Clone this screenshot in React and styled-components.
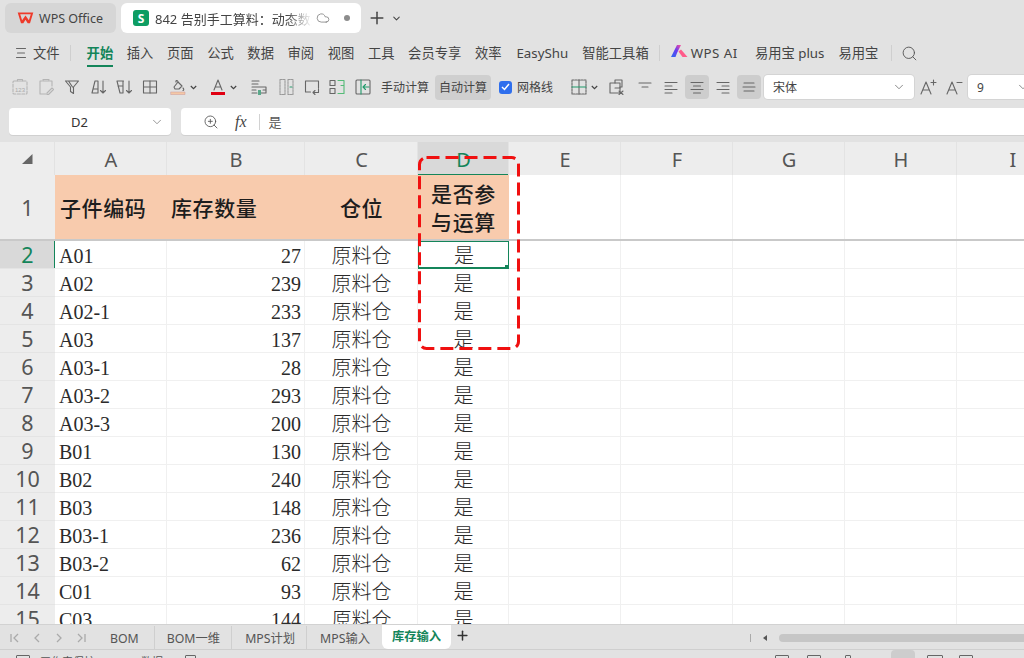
import React from "react";
import styled, { createGlobalStyle } from "styled-components";
import { Plus, ChevronDown, Cloud, Search, ZoomIn } from "lucide-react";

const UI = `"Noto Sans", "Noto Sans CJK SC", sans-serif`;
const CELL = `"Liberation Serif", "Noto Sans CJK SC", serif`;
const GREEN = "#14855a";
const COLS = "55px 112px 138px 113px 91px 112px 112px 112px 112px 112px";

const Global = createGlobalStyle`
  html, body { margin: 0; padding: 0; background: #e2e2e2; }
  * { box-sizing: border-box; }
`;
const Page = styled.div`
  width: 1024px; height: 658px; overflow: hidden; display: flex; flex-direction: column;
  background: #e2e2e2; font-family: ${UI}; color: #3c3c3c;
`;

/* title bar */
const TitleBar = styled.div`
  height: 37px; flex: none; display: flex; align-items: flex-start; padding: 3px 0 0 5px; gap: 5px;
`;
const WpsTab = styled.div`
  width: 111px; height: 30px; border-radius: 6px; background: #d6d6d6; display: flex; align-items: center;
  padding-left: 12px; gap: 5px; font-size: 12.5px; color: #444;
`;
const DocTab = styled.div`
  width: 240px; height: 30px; border-radius: 6px; background: #fff; display: flex; align-items: center;
  padding-left: 12px; font-size: 13px; color: #444;
`;
const SBadge = styled.span`
  width: 16px; height: 16px; border-radius: 3px; background: #0d9d63; color: #fff; font-size: 12px; font-weight: 700;
  display: flex; align-items: center; justify-content: center; flex: none; margin-right: 6px;
`;
const DocTitle = styled.span`
  width: 157px; white-space: nowrap; overflow: hidden; flex: none;
  mask-image: linear-gradient(to right, #000 84%, transparent 100%);
`;
const Dot = styled.span`
  width: 6px; height: 6px; border-radius: 50%; background: #8c8c8c; margin-left: 14px;
`;
const AddGroup = styled.div`
  display: flex; align-items: center; height: 30px; margin-left: 1px; gap: 4px; color: #444;
`;

/* menu */
const Menu = styled.div`
  height: 32px; flex: none; display: flex; align-items: center; padding-left: 16px; font-size: 13.3px; color: #444; white-space: nowrap;
`;
const MenuItem = styled.div`
  position: relative; margin-left: ${p => p.$ml ?? 13.6}px; font-weight: ${p => (p.$active ? 700 : 400)};
  letter-spacing: ${p => p.$ls ?? 0}px;
  color: ${p => (p.$active ? GREEN : "#444")}; line-height: 20px;
  ${p => p.$active && `&::after { content: ""; position: absolute; left: 0; right: 0; bottom: -4px; height: 2px; background: ${GREEN}; }`}
`;
const MenuDivider = styled.span`
  width: 1px; height: 16px; background: #cfcfcf; margin-left: ${p => p.$ml}px;
`;

/* toolbar */
const Toolbar = styled.div`
  height: 36px; flex: none; display: flex; align-items: center; padding: 0 0 0 7px; white-space: nowrap;
`;
const Slot = styled.div`
  width: ${p => p.$w ?? 26}px; height: 24px; flex: none; display: flex; align-items: center; justify-content: center; gap: 3px;
  margin-left: ${p => p.$ml ?? 0}px; border-radius: 4px; background: ${p => (p.$on ? "#cdcdcd" : "transparent")}; color: #555;
`;
const ToolText = styled.div`
  font-size: 12px; color: #444; height: 25px; line-height: 25px; padding: 0 ${p => p.$pad ?? 0}px; margin-left: ${p => p.$ml ?? 0}px;
  border-radius: 4px; background: ${p => (p.$on ? "#cfcfcf" : "transparent")}; flex: none;
`;
const Check = styled.span`
  width: 13px; height: 13px; border-radius: 3px; background: #2f6fed; margin-left: 8px; flex: none; display: flex; align-items: center; justify-content: center;
`;
const Select = styled.div`
  width: ${p => p.$w}px; height: 24px; margin-left: ${p => p.$ml ?? 0}px; background: #fff; border-radius: 4px; flex: none;
  display: flex; align-items: center; justify-content: space-between; padding: 0 8px 0 9px; font-size: 12px; color: #444;
  box-shadow: 0 0 0 1px #d4d4d4;
`;

/* formula bar */
const FormulaBar = styled.div`
  height: 28px; flex: none; margin-top: 3px; display: flex; gap: 10px; padding-left: 9px;
`;
const NameBox = styled.div`
  width: 162px; height: 27px; background: #fff; border-radius: 4px; box-shadow: 0 1px 0 #d0d0d0; display: flex; align-items: center;
  font-size: 13px; color: #333;
  padding: 0 7px 0 62px; justify-content: space-between;
`;
const FormulaBox = styled.div`
  flex: 1; height: 27px; background: #fff; border-radius: 4px 0 0 4px; box-shadow: 0 1px 0 #d0d0d0; display: flex; align-items: center;
  padding-left: 22px; color: #555; font-size: 13px;
`;
const Fx = styled.i`
  font-family: "Liberation Serif", serif; font-size: 16px; margin-left: 16px; color: #444;
`;
const FormulaDivider = styled.span`
  width: 1px; height: 16px; background: #d2d2d2; margin: 0 9px 0 12px;
`;

/* sheet */
const Sheet = styled.div`
  position: relative; flex: none; height: 482px; margin-top: 6px; overflow: hidden; background: #fff;
`;
const Row = styled.div`
  display: grid; grid-template-columns: ${COLS}; grid-template-rows: ${p => p.$h}px; height: ${p => p.$h}px;
  ${p => p.$freeze && `box-shadow: 0 -2px 0 #c9c9c9; position: relative; z-index: 1;`}
`;
const Corner = styled.div`
  background: #ededed; border-right: 1px solid #e2e2e2; display: flex; align-items: center; justify-content: center;
`;
const ColHead = styled.div`
  background: ${p => (p.$sel ? "#d9d9d9" : "#ededed")}; color: ${p => (p.$sel ? GREEN : "#555")};
  border-right: 1px solid #e3e3e3; font-size: 20px; line-height: 35px; text-align: center; padding-left: 1px;
  ${p => p.$sel && `box-shadow: inset 0 -1px 0 ${GREEN};`}
`;
const RowHead = styled.div`
  background: ${p => (p.$sel ? "#d9d9d9" : "#ededed")}; color: ${p => (p.$sel ? GREEN : "#555")};
  font-size: 21.5px; display: flex; align-items: center; justify-content: center; padding-bottom: 1px;
  border-bottom: 1px solid #e4e4e4;
  ${p => p.$sel && `box-shadow: inset -1px 0 0 ${GREEN};`}
`;
const Title = styled.div`
  background: #f8cbad; font-family: ${CELL}; font-size: 21px; font-weight: 500; color: #1d1d1d; letter-spacing: 0.6px;
  display: flex; align-items: center; justify-content: ${p => p.$align ?? "center"}; text-align: center; line-height: 28px;
  padding-left: ${p => p.$pl ?? 0}px;
  padding-top: 2px;
`;
const Cell = styled.div`
  position: relative; font-family: ${CELL}; font-size: 20px; color: #2b2b2b; font-weight: 300; line-height: 30px; padding: 0 3px 0 4px;
  border-right: 1px solid #f0f0f0; border-bottom: 1px solid #f0f0f0; white-space: nowrap;
  text-align: ${p => p.$align ?? "left"};
  ${p => p.$sel && `
    border: 0; padding-bottom: 0;
    box-shadow: inset 1px 0 0 ${GREEN}, inset -1px 0 0 ${GREEN}, inset 0 1px 0 ${GREEN}, inset 0 -2px 0 ${GREEN};
    &::after { content: ""; position: absolute; right: 0; bottom: 0; width: 4px; height: 4px; background: ${GREEN}; }
  `}
`;
const Dashed = styled.svg`
  position: absolute; left: 416px; top: 12px; z-index: 3; pointer-events: none;
`;

/* sheet tabs */
const TabBar = styled.div`
  height: 26px; flex: none; display: flex; align-items: flex-start; border-top: 1px solid #d2d2d2; border-bottom: 1px solid #cfcfcf; font-size: 12.3px; color: #555; white-space: nowrap;
`;
const Nav = styled.div`
  display: flex; align-items: center; gap: 0; height: 25px; width: 99px; padding-left: 4px; color: #aaa; flex: none;
`;
const NavBtn = styled.span`
  width: 22px; display: flex; justify-content: center; flex: none;
`;
const SheetTab = styled.div`
  height: 23px; line-height: 25px; padding: 0 ${p => p.$pr ?? 11}px 0 ${p => p.$pl ?? 13}px; flex: none;
  border-right: ${p => (p.$sep ? "1px solid #cfcfcf" : "none")}; margin-top: 1px;
`;
const ActiveTab = styled.div`
  width: 69px; height: 24px; line-height: 24px; text-align: center; background: #fff; color: ${GREEN}; font-weight: 700; border-radius: 0 0 6px 6px; margin-left: 0; flex: none;
`;
const AddSheet = styled.div`
  margin: 3px 0 0 4px; width: 16px; color: #333; display: flex; flex: none;
`;
const ScrollArea = styled.div`
  margin-left: auto; display: flex; align-items: center; height: 25px; flex: none;
`;
const ScrollSep = styled.span`
  width: 1px; height: 8px; background: #aaa;
`;
const ScrollArrow = styled.span`
  width: 0; height: 0; border: 3px solid transparent; border-right: 4px solid #555; border-left: 0; margin: 0 12px 0 12px;
`;
const Thumb = styled.div`
  width: 245px; height: 8px; border-radius: 4px 0 0 4px; background: #c6c6c6;
`;

/* status */
const Status = styled.div`
  flex: 1; overflow: hidden; display: flex; align-items: flex-start; padding: 5px 0 0 16px; font-size: 11px; color: #555; line-height: 14px; white-space: nowrap; position: relative;
`;
const StatusText = styled.span`
  margin-left: ${p => p.$ml}px;
`;
const StatusGlyph = styled.span`
  width: ${p => p.$w ?? 14}px; height: 14px; flex: none; margin-left: ${p => p.$ml}px; border: 1px solid #666; border-radius: 1px;
`;
const ViewActive = styled.span`
  width: 24px; height: 14px; margin-left: ${p => p.$ml}px; margin-top: -5px; flex: none; background: #cdcdcd; border-radius: 4px 4px 0 0;
`;

/* icon helper */
const Ic = ({ w = 18, h = 18, children, vb }) => (
  <svg width={w} height={h} viewBox={vb || `0 0 ${w} ${h}`} fill="none" stroke="#666" strokeWidth="1.1" strokeLinecap="round" strokeLinejoin="round">{children}</svg>
);
const Caret = () => (
  <svg width="7" height="5" viewBox="0 0 7 5"><path d="M.8 1l2.7 2.6L6.2 1" fill="none" stroke="#444" strokeWidth="1.2" /></svg>
);

const WpsLogo = () => (
  <svg width="17" height="14" viewBox="0 0 17 14"><path d="M.7 1.5h15.6l-3.3 10.7h-2.3L8.500 8.800l-2.200 3.400H4zM3.200 3.300l1.900 6 3.400-4.800 3.400 4.800 1.900-6z" fill="#ee3a2a" fillRule="evenodd" /></svg>
);
const AiLogo = () => (
  <svg width="17" height="13" viewBox="0 0 17 13">
    <defs><linearGradient id="ai" x1="0" x2="1" y1="1" y2="0"><stop offset="0" stopColor="#2a6cf0" /><stop offset="0.55" stopColor="#6a3cf0" /><stop offset="1" stopColor="#ff4f9a" /></linearGradient></defs>
    <path d="M0 12L6 0h4L6 8l-1.5 4z" fill="url(#ai)" /><path d="M7.5 6.5L10 4.5 16.5 12h-5z" fill="#ff5b8a" />
  </svg>
);

const rows = [
  ["A01", 27], ["A02", 239], ["A02-1", 233], ["A03", 137], ["A03-1", 28], ["A03-2", 293], ["A03-3", 200],
  ["B01", 130], ["B02", 240], ["B03", 148], ["B03-1", 236], ["B03-2", 62], ["C01", 93], ["C03", 144],
];
const menus = [
  ["插入"], ["页面"], ["公式"], ["数据"], ["审阅"], ["视图"], ["工具"], ["会员专享"], ["效率"], ["EasyShu", 15], ["智能工具箱", 14],
];

export default function App() {
  return (
    <Page>
      <Global />
      <TitleBar>
        <WpsTab><WpsLogo />WPS Office</WpsTab>
        <DocTab>
          <SBadge>S</SBadge>
          <DocTitle>842 告别手工算料：动态数组公式</DocTitle>
          <Cloud size={14} color="#777" strokeWidth={1.3} style={{ marginLeft: 4 }} />
          <Dot />
        </DocTab>
        <AddGroup>
          <Plus size={20} color="#444" strokeWidth={1.8} />
          <ChevronDown size={11} color="#444" strokeWidth={2.2} />
        </AddGroup>
      </TitleBar>

      <Menu>
        <Ic w={10} h={12}><path d="M.5 1.5h9M1.5 6h7M.5 10.5h9" /></Ic>
        <MenuItem $ml={7}>文件</MenuItem>
        <MenuDivider $ml={10} />
        <MenuItem $ml={16} $active>开始</MenuItem>
        {menus.map(([t, ml]) => <MenuItem key={t} $ml={ml}>{t}</MenuItem>)}
        <MenuDivider $ml={10} />
        <MenuItem $ml={11}><AiLogo /></MenuItem>
        <MenuItem $ml={3} $ls={0.5}>WPS AI</MenuItem>
        <MenuItem $ml={17}>易用宝 plus</MenuItem>
        <MenuItem $ml={14}>易用宝</MenuItem>
        <MenuDivider $ml={13} />
        <Search size={17} color="#555" strokeWidth={1.3} style={{ marginLeft: 9 }} />
      </Menu>

      <Toolbar>
        <Slot><Ic><rect x="2" y="3" width="14" height="13" rx="1" stroke="#b4b4b4" strokeDasharray="3 1.5" /><path d="M6.5 3V1.5h5V3" stroke="#b4b4b4" /><text x="4" y="13.5" fontSize="6" fill="#aaa" stroke="none" fontFamily="Liberation Sans">123</text></Ic></Slot>
        <Slot><Ic><path d="M5 3H3v13h6M13 3h2v5" stroke="#b4b4b4" /><path d="M6 3V1.5h6V3zM10 15l5-5 1.5 1.5-5 5H10z" stroke="#b4b4b4" /></Ic></Slot>
        <Slot><Ic><path d="M2.5 3h13l-5 6v6.5l-3-2V9zM5.5 3l4 6" /></Ic></Slot>
        <Slot><Ic><path d="M3 15L6 3h3v12H3zM4 11h5M14 3v12M11.5 12.5L14 15l2.5-2.5" /></Ic></Slot>
        <Slot><Ic><path d="M2 3h6v12H5zM2.5 3h6M3 8h5M14 3v12M11.5 12.5L14 15l2.5-2.5" /></Ic></Slot>
        <Slot><Ic><rect x="2.5" y="3" width="13" height="12" /><path d="M9 3v12M2.5 9h13" /></Ic></Slot>
        <Slot $w={40}><Ic><path d="M5 9l4-5 4 4-3 3H6zM9 3.5C8 2 6.5 2.5 7 4M14 10c1 1 1 2 0 2.5" /><rect x="2" y="14" width="14" height="2.5" fill="#f4c8a6" stroke="#c99" strokeWidth="0.5" /></Ic><Caret /></Slot>
        <Slot $w={40}><Ic><path d="M5 12L9 2l4 10M6.2 9h5.6" /><rect x="2" y="14" width="14" height="3" fill="#e00012" stroke="none" /></Ic><Caret /></Slot>
        <Slot $w={32}><Ic><path d="M2 3h7M2 6h6M2 9h14v3M2 12h4M2 15h5M9 15h7v-3h-3" /><path d="M8 12h3v5H8z" fill="#5aa88a" stroke="none" /></Ic></Slot>
        <Slot $w={24}><Ic><rect x="2" y="1.5" width="5" height="15" strokeDasharray="2 1" stroke="#999" /><rect x="10" y="1.5" width="5" height="15" strokeDasharray="2 1" stroke="#999" /><path d="M12 9h2" stroke="#2b9a6d" /></Ic></Slot>
        <Slot $w={26}><Ic><path d="M15.5 10V3h-13v11h5M15.5 11v3.500h-5M12 12.500l-2 2 2 2" /></Ic></Slot>
        <Slot $w={24}><Ic><path d="M10 2.500h6v5h-3M10 15.500h6v-8" stroke="#5b7" /><path d="M2 2.500h5v5H2zM2 10.500h5v5H2z" stroke="#666" /></Ic></Slot>
        <Slot $w={28}><Ic><rect x="2" y="2" width="14" height="14" rx="1" /><path d="M7 2v14M15 9H9.500M11.500 6.500L9 9l2.500 2.500" stroke="#1f9a6a" /></Ic></Slot>
        <ToolText $ml={4}>手动计算</ToolText>
        <ToolText $ml={6} $on $pad={4}>自动计算</ToolText>
        <Check><svg width="9" height="8" viewBox="0 0 9 8"><path d="M1 4l2.500 2.500L8 1" fill="none" stroke="#fff" strokeWidth="1.5" /></svg></Check>
        <ToolText $ml={5}>网格线</ToolText>
        <Slot $w={32} $ml={15}><Ic><rect x="2" y="2" width="14" height="14" strokeDasharray="2 1" /><path d="M9 2v14" /><path d="M2 9h14" stroke="#1f9a6a" /></Ic><Caret /></Slot>
        <Slot $w={24} $ml={5}><Ic><rect x="2" y="5" width="10" height="10" /><path d="M7 5V2h7v7h-2M7 10h5M11 13l4 3.500M15 13l-4 3.500" /></Ic></Slot>
        <Slot $ml={3}><Ic w={14} h={14}><path d="M1 3h12M4 7h6" /></Ic></Slot>
        <Slot $w={24} $ml={1}><Ic w={14} h={14}><path d="M1 2.500h12M1 6h7M1 9.500h12M1 13h7" /></Ic></Slot>
        <Slot $w={24} $on $ml={2}><Ic w={14} h={14}><path d="M1 2.500h12M3.500 6h7M1 9.500h12M3.500 13h7" /></Ic></Slot>
        <Slot $w={28}><Ic w={14} h={14}><path d="M1 2.500h12M6 6h7M1 9.500h12M6 13h7" /></Ic></Slot>
        <Slot $w={24} $on $ml={0}><Ic w={14} h={14}><path d="M2 3h10M1 7h12M2 11h10" /></Ic></Slot>
        <Select $w={150} $ml={3}>宋体<ChevronDown size={14} color="#666" strokeWidth={1.3} /></Select>
        <Slot $ml={0} $w={27}><Ic><path d="M2 16L7 4l5 12M3.800 12h6.400M12 4.500h5M14.500 2v5" /></Ic></Slot>
        <Slot $ml={0} $w={26}><Ic><path d="M2 16L7 4l5 12M3.800 12h6.400M12 4.500h5" /></Ic></Slot>
        <Select $w={70} $ml={1}>9<ChevronDown size={14} color="#666" strokeWidth={1.3} /></Select>
      </Toolbar>

      <FormulaBar>
        <NameBox>D2<ChevronDown size={14} color="#777" strokeWidth={1.3} /></NameBox>
        <FormulaBox>
          <ZoomIn size={16} color="#555" strokeWidth={1.3} />
          <Fx>fx</Fx>
          <FormulaDivider />
          是
        </FormulaBox>
      </FormulaBar>

      <Sheet>
        <Row $h={33}>
          <Corner><svg width="11" height="10" viewBox="0 0 11 10"><path d="M10.500 0v10H0z" fill="#666" /></svg></Corner>
          {"ABCDEFGHI".split("").map(c => <ColHead key={c} $sel={c === "D"}>{c}</ColHead>)}
        </Row>
        <Row $h={66}>
          <RowHead>1</RowHead>
          <Title $align="flex-start" $pl={5}>子件编码</Title>
          <Title $align="flex-start" $pl={4}>库存数量</Title>
          <Title>仓位</Title>
          <Title>是否参<br />与运算</Title>
          <Cell /><Cell /><Cell /><Cell /><Cell />
        </Row>
        {rows.map(([code, n], i) => (
          <Row $h={28} key={code} $freeze={i === 0}>
            <RowHead $sel={i === 0}>{i + 2}</RowHead>
            <Cell>{code}</Cell>
            <Cell $align="right">{n}</Cell>
            <Cell $align="center">原料仓</Cell>
            <Cell $align="center" $sel={i === 0}>是</Cell>
            <Cell /><Cell /><Cell /><Cell /><Cell />
          </Row>
        ))}
        <Dashed width="106" height="198" viewBox="0 0 106 198">
          <rect x="3.500" y="3.500" width="99" height="191" rx="7" fill="none" stroke="#f01010" strokeWidth="3" strokeDasharray="13 6" />
        </Dashed>
      </Sheet>

      <TabBar>
        <Nav>
          <NavBtn><svg width="10" height="10" viewBox="0 0 10 10" fill="none" stroke="#aaa" strokeWidth="1.300"><path d="M1 1v8M8 1L4 5l4 4" /></svg></NavBtn>
          <NavBtn><svg width="8" height="10" viewBox="0 0 8 10" fill="none" stroke="#aaa" strokeWidth="1.300"><path d="M6 1L2 5l4 4" /></svg></NavBtn>
          <NavBtn><svg width="8" height="10" viewBox="0 0 8 10" fill="none" stroke="#aaa" strokeWidth="1.300"><path d="M2 1l4 4-4 4" /></svg></NavBtn>
          <NavBtn><svg width="10" height="10" viewBox="0 0 10 10" fill="none" stroke="#aaa" strokeWidth="1.300"><path d="M2 1l4 4-4 4M9 1v8" /></svg></NavBtn>
        </Nav>
        <SheetTab $pl={11} $pr={15} $sep>BOM</SheetTab>
        <SheetTab $pl={12} $sep>BOM一维</SheetTab>
        <SheetTab $pl={13} $sep>MPS计划</SheetTab>
        <SheetTab $pl={13} $pr={12}>MPS输入</SheetTab>
        <ActiveTab>库存输入</ActiveTab>
        <AddSheet><Plus size={15} color="#333" strokeWidth={2.4} /></AddSheet>
        <ScrollArea>
          <ScrollSep />
          <ScrollArrow />
          <Thumb />
        </ScrollArea>
      </TabBar>

      <Status>
        <StatusGlyph $ml={0} $w={14} />
        <StatusText $ml={10}>工作表保护</StatusText>
        <StatusText $ml={46}>数据</StatusText>
        <StatusGlyph $ml={22} $w={11} />
        <StatusGlyph $ml={579} />
        <StatusGlyph $ml={18} />
        <StatusGlyph $ml={24} $w={6} />
        <ViewActive $ml={40} />
        <StatusGlyph $ml={12} $w={16} />
        <StatusGlyph $ml={16} $w={14} />
      </Status>
    </Page>
  );
}
